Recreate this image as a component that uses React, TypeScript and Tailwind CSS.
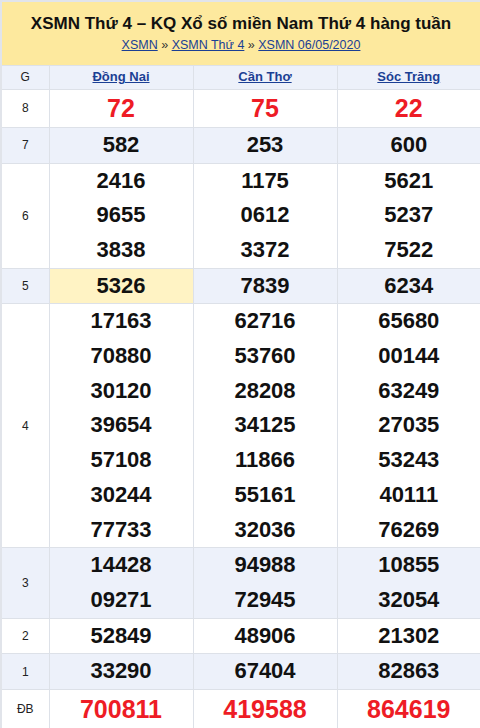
const provinces = ["Đồng Nai", "Cần Thơ", "Sóc Trăng"];

type Prize = {
  label: string;
  values: string[][];
  red?: boolean;
  shaded: boolean;
  h: string;
};

const prizes: Prize[] = [
  { label: "8", values: [["72"], ["75"], ["22"]], red: true, shaded: false, h: "h-[38px]" },
  { label: "7", values: [["582"], ["253"], ["600"]], shaded: true, h: "h-[36px]" },
  {
    label: "6",
    values: [
      ["2416", "9655", "3838"],
      ["1175", "0612", "3372"],
      ["5621", "5237", "7522"],
    ],
    shaded: false,
    h: "h-[105px]",
  },
  { label: "5", values: [["5326"], ["7839"], ["6234"]], shaded: true, h: "h-[35px]" },
  {
    label: "4",
    values: [
      ["17163", "70880", "30120", "39654", "57108", "30244", "77733"],
      ["62716", "53760", "28208", "34125", "11866", "55161", "32036"],
      ["65680", "00144", "63249", "27035", "53243", "40111", "76269"],
    ],
    shaded: false,
    h: "h-[243px]",
  },
  {
    label: "3",
    values: [
      ["14428", "09271"],
      ["94988", "72945"],
      ["10855", "32054"],
    ],
    shaded: true,
    h: "h-[70px]",
  },
  { label: "2", values: [["52849"], ["48906"], ["21302"]], shaded: false, h: "h-[35px]" },
  { label: "1", values: [["33290"], ["67404"], ["82863"]], shaded: true, h: "h-[36px]" },
  { label: "ĐB", values: [["700811"], ["419588"], ["864619"]], red: true, shaded: false, h: "h-[39px]" },
];

export default function App() {
  return (
    <div className="w-[480px] h-[728px] bg-white font-['Liberation_Sans',Arial,sans-serif]">
      <table className="w-full border-collapse border-2 border-[#e1e4ea] table-fixed">
        <colgroup>
          <col className="w-[48px]" />
          <col className="w-[144px]" />
          <col className="w-[144px]" />
          <col className="w-[144px]" />
        </colgroup>
        <thead>
          <tr>
            <th colSpan={4} className="bg-[#fde99e] h-[64px] text-center font-normal pt-[1px]">
              <div className="text-[17px] font-bold text-[#111] leading-[22px]">
                XSMN Thứ 4 – KQ Xổ số miền Nam Thứ 4 hàng tuần
              </div>
              <div className="text-[12.5px] text-[#1b3f94] leading-[18px] mt-[1px]">
                <a className="underline">XSMN</a>
                <span className="text-[#333]"> » </span>
                <a className="underline">XSMN Thứ 4</a>
                <span className="text-[#333]"> » </span>
                <a className="underline">XSMN 06/05/2020</a>
              </div>
            </th>
          </tr>
          <tr className="bg-[#edf1fa] h-[24px]">
            <th className="border border-[#dde1e8] text-[12px] font-normal text-[#222]">G</th>
            {provinces.map((p) => (
              <th
                key={p}
                className="border border-[#dde1e8] text-[13px] font-bold text-[#1b3f94] underline"
              >
                {p}
              </th>
            ))}
          </tr>
        </thead>
        <tbody>
          {prizes.map((pr) => (
            <tr key={pr.label} className={`${pr.h} ${pr.shaded ? "bg-[#edf1fa]" : "bg-white"}`}>
              <td className="border border-[#dde1e8] text-center text-[12px] text-[#222]">
                {pr.label}
              </td>
              {pr.values.map((col, ci) => (
                <td
                  key={ci}
                  className={`border border-[#dde1e8] text-center font-bold ${
                    pr.label === "5" && ci === 0 ? "bg-[#fff3c4]" : ""
                  }`}
                >
                  {col.map((v) => (
                    <div
                      key={v}
                      className={
                        pr.red
                          ? "text-[25px] leading-[34px] text-[#ee1c25]"
                          : "text-[22px] leading-[34.7px] text-[#111]"
                      }
                    >
                      {v}
                    </div>
                  ))}
                </td>
              ))}
            </tr>
          ))}
        </tbody>
      </table>
    </div>
  );
}
